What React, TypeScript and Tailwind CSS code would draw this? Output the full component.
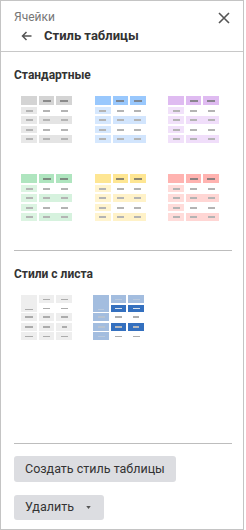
import type React from "react"

type Palette = { head: string; band: string; col: string; headDash: string; dash: string }

const palettes: Palette[] = [
  { head: "bg-[#d4d4d4]", band: "bg-[#e4e4e4]", col: "bg-[#e8e8e8]", headDash: "bg-[#8a8a8a]", dash: "bg-[#b4b4b4]" },
  { head: "bg-[#99c8fd]", band: "bg-[#d2e5fd]", col: "bg-[#d6e8fe]", headDash: "bg-[#7d8794]", dash: "bg-[#b4b4b4]" },
  { head: "bg-[#dfbbf1]", band: "bg-[#f0defa]", col: "bg-[#f1e1fa]", headDash: "bg-[#8a8590]", dash: "bg-[#b4b4b4]" },
  { head: "bg-[#afe5bf]", band: "bg-[#d6f2de]", col: "bg-[#dcf4e2]", headDash: "bg-[#7d8a80]", dash: "bg-[#b4b4b4]" },
  { head: "bg-[#fee693]", band: "bg-[#fff2c8]", col: "bg-[#fff4cf]", headDash: "bg-[#8c8670]", dash: "bg-[#b4b4b4]" },
  { head: "bg-[#ffb3b0]", band: "bg-[#ffd6d4]", col: "bg-[#ffdcda]", headDash: "bg-[#8c7f7f]", dash: "bg-[#b4b4b4]" },
]

function Dash({ color, w = "w-[7px]", h = "h-[2px]" }: { color: string; w?: string; h?: string }) {
  return <span className={`${w} ${h} ${color}`} />
}

function Cell({ bg, children }: { bg: string; children?: React.ReactNode }) {
  return <div className={`${bg} flex items-center justify-center`}>{children}</div>
}

function StandardThumb({ p }: { p: Palette }) {
  const bodyRow = (banded: boolean, key: number) => (
    <div key={key} className="contents">
      <Cell bg={p.col}>
        <Dash color={p.dash} />
      </Cell>
      {banded ? (
        <div className={`col-span-2 ${p.band} grid grid-cols-[15px_16px] gap-[2px]`}>
          <div className="flex items-center justify-center">
            <Dash color={p.dash} />
          </div>
          <div className="flex items-center justify-center">
            <Dash color={p.dash} />
          </div>
        </div>
      ) : (
        <>
          <Cell bg="bg-white">
            <Dash color={p.dash} />
          </Cell>
          <Cell bg="bg-white">
            <Dash color={p.dash} />
          </Cell>
        </>
      )}
    </div>
  )
  return (
    <div className="grid grid-cols-[16px_15px_16px] grid-rows-[9px_7px_8px_7px_8px] gap-[2px] w-[51px]">
      <Cell bg={p.head} />
      <Cell bg={p.head}>
        <Dash color={p.headDash} w="w-[8px]" />
      </Cell>
      <Cell bg={p.head}>
        <Dash color={p.headDash} w="w-[8px]" />
      </Cell>
      {bodyRow(false, 1)}
      {bodyRow(true, 2)}
      {bodyRow(false, 3)}
      {bodyRow(true, 4)}
    </div>
  )
}

function SheetThumbGray() {
  const g = "bg-[#eeeeee]"
  const d = "bg-[#acacac]"
  return (
    <div className="grid grid-cols-[16px_15px_16px] grid-rows-[8px_7px_8px_8px_8px] gap-x-[2px] gap-y-[1.5px] w-[51px]">
      <div className={`${g} row-span-2 flex items-end justify-center pb-[2px]`}>
        <Dash color={d} w="w-[8px]" h="h-[1px]" />
      </div>
      <Cell bg={g}>
        <Dash color={d} w="w-[7px]" h="h-[1px]" />
      </Cell>
      <Cell bg={g}>
        <Dash color={d} w="w-[7px]" h="h-[1px]" />
      </Cell>
      <Cell bg="bg-white">
        <Dash color={d} w="w-[7px]" h="h-[1px]" />
      </Cell>
      <Cell bg="bg-white">
        <Dash color={d} w="w-[7px]" h="h-[1px]" />
      </Cell>
      {[0, 1, 2].map((i) => (
        <div key={i} className="contents">
          <Cell bg={g}>
            <Dash color={d} w="w-[8px]" h={i === 2 ? "h-[1px]" : "h-[2px]"} />
          </Cell>
          <Cell bg={g}>
            <Dash color={d} w="w-[7px]" h={i === 2 ? "h-[1px]" : "h-[2px]"} />
          </Cell>
          <Cell bg={g}>
            <Dash color={d} w={i === 1 ? "w-[5px]" : "w-[7px]"} h={i === 2 ? "h-[1px]" : "h-[2px]"} />
          </Cell>
        </div>
      ))}
    </div>
  )
}

function SheetThumbBlue() {
  const lb = "bg-[#a3bddf]"
  const db = "bg-[#3470bf]"
  const gd = "bg-[#aeaeae]"
  return (
    <div className="grid grid-cols-[16px_15px_16px] grid-rows-[8px_7px_8px_8px_8px] gap-x-[2px] gap-y-[1.5px] w-[51px]">
      <div className={`${lb} row-span-2 flex items-end justify-center pb-[2px]`}>
        <Dash color="bg-[#b9c9de]" w="w-[6px]" h="h-[1px]" />
      </div>
      <Cell bg={lb}>
        <Dash color="bg-[#b9c9de]" w="w-[7px]" h="h-[1px]" />
      </Cell>
      <Cell bg={lb}>
        <Dash color="bg-[#b9c9de]" w="w-[7px]" h="h-[1px]" />
      </Cell>
      <Cell bg={db}>
        <Dash color="bg-[#d8e2ee]" w="w-[7px]" h="h-[1px]" />
      </Cell>
      <Cell bg={db}>
        <Dash color="bg-[#d8e2ee]" w="w-[7px]" h="h-[1px]" />
      </Cell>
      <Cell bg={lb}>
        <Dash color="bg-[#b7c3d2]" w="w-[7px]" />
      </Cell>
      <Cell bg="bg-white">
        <Dash color={gd} w="w-[7px]" />
      </Cell>
      <Cell bg="bg-white">
        <Dash color={gd} w="w-[6px]" />
      </Cell>
      <Cell bg={lb}>
        <Dash color="bg-[#b7c3d2]" w="w-[7px]" />
      </Cell>
      <Cell bg={db}>
        <Dash color="bg-[#b4b8be]" w="w-[7px]" />
      </Cell>
      <Cell bg={db}>
        <Dash color="bg-[#b4b8be]" w="w-[6px]" />
      </Cell>
      <Cell bg={lb}>
        <Dash color="bg-[#b9c9de]" w="w-[7px]" h="h-[1px]" />
      </Cell>
      <Cell bg="bg-white">
        <Dash color={gd} w="w-[7px]" h="h-[1px]" />
      </Cell>
      <Cell bg="bg-white">
        <Dash color={gd} w="w-[7px]" h="h-[1px]" />
      </Cell>
    </div>
  )
}

export default function App(): React.JSX.Element {
  return (
    <div
      className="w-[244px] h-[530px] border border-[#c4c4c4] bg-white flex flex-col text-[#333]"
      style={{ fontFamily: "Roboto, 'Liberation Sans', sans-serif" }}
    >
      <header className="h-[51px] border-b border-[#c8c8c8] pl-[13px] pr-[14px] pt-[8px]">
        <div className="flex items-center justify-between h-[15px]">
          <span className="text-[12px] leading-[14px] text-[#777]">Ячейки</span>
          <svg width="12" height="12" viewBox="0 0 12 12" className="mt-[2px] -mr-[1px]">
            <path d="M1 1 L11 11 M11 1 L1 11" stroke="#555" strokeWidth="1.6" />
          </svg>
        </div>
        <div className="flex items-center h-[22px] mt-[1px]">
          <svg width="11" height="10" viewBox="0 0 11 10" className="ml-[7px]">
            <path d="M10.5 5 H1.5 M5.5 1 L1.5 5 L5.5 9" stroke="#555" strokeWidth="1.5" fill="none" />
          </svg>
          <h1 className="ml-[12px] font-bold text-[13px] text-[#333]">Стиль таблицы</h1>
        </div>
      </header>

      <section className="pl-[13px] pr-[11px]">
        <h2 className="mt-[15px] font-bold text-[12px] leading-[16px] text-[#333]">Стандартные</h2>
        <div className="mt-[13px] ml-[7px] grid grid-cols-[51px_51px_51px] gap-x-[22.5px] gap-y-[31px]">
          {palettes.map((p, i) => (
            <StandardThumb key={i} p={p} />
          ))}
        </div>
        <div className="mt-[29px] h-px bg-[#bdbdbd]" />
        <h2 className="mt-[15px] font-bold text-[12px] leading-[16px] text-[#333]">Стили с листа</h2>
        <div className="mt-[13px] ml-[7px] flex gap-[21px]">
          <SheetThumbGray />
          <SheetThumbBlue />
        </div>
      </section>

      <footer className="mt-auto pl-[13px] pr-[11px] pb-[9px]">
        <div className="h-px bg-[#bdbdbd]" />
        <button className="mt-[12px] h-[26px] px-[11px] rounded-[3px] bg-[#dcdde1] text-[12.5px] text-[#333]">
          Создать стиль таблицы
        </button>
        <div>
          <button className="mt-[13px] h-[25px] pl-[11px] pr-[13px] rounded-[3px] bg-[#dcdde1] text-[12.5px] text-[#333] flex items-center">
            Удалить
            <svg width="5" height="3" viewBox="0 0 6 4" className="ml-[12px]">
              <path d="M0 0 H6 L3 4 Z" fill="#555" />
            </svg>
          </button>
        </div>
      </footer>
    </div>
  )
}
